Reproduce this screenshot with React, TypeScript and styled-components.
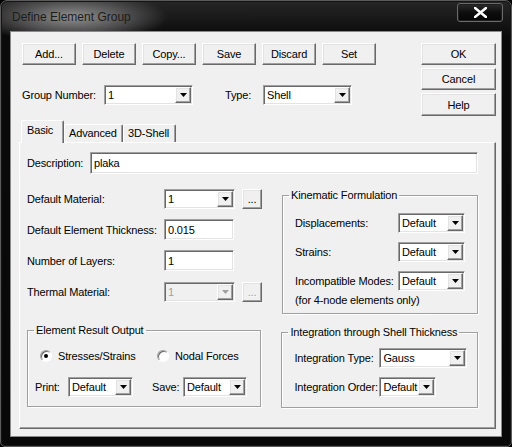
import React from "react";
import styled, { createGlobalStyle } from "styled-components";

const GlobalStyle = createGlobalStyle`
  html, body {
    margin: 0;
    padding: 0;
    background: #000;
  }
  body {
    font-family: "Liberation Sans", Arial, sans-serif;
    font-size: 11px;
    letter-spacing: -0.15px;
    color: #000;
  }
`;

const Frame = styled.div`
  width: 512px;
  height: 447px;
  box-sizing: border-box;
  border: 1px solid #5a5a5a;
  border-radius: 7px 7px 5px 5px;
  padding: 0 9px 9px 9px;
  display: flex;
  flex-direction: column;
  background:
    radial-gradient(ellipse 95px 26px at 72px 16px, rgba(150, 150, 150, 0.95) 0%, rgba(95, 95, 95, 0.8) 55%, rgba(0, 0, 0, 0) 100%),
    linear-gradient(#262626, #0a0a0a 36px, #080808);
  box-shadow: inset 0 0 0 1px #151515;
`;

const TitleBar = styled.div`
  height: 30px;
  display: flex;
  justify-content: space-between;
  align-items: flex-start;
`;

const Title = styled.div`
  font-size: 12px;
  line-height: 14px;
  letter-spacing: 0;
  color: #1c1c1c;
  padding: 9px 0 0 2px;
`;

const CloseBtn = styled.div`
  width: 46px;
  height: 19px;
  margin: 2px -1px 0 0;
  box-sizing: border-box;
  border: 1px solid #6a6a6a;
  border-radius: 3px;
  background: linear-gradient(#2c2c2c, #0e0e0e 50%, #050505);
  box-shadow: inset 0 0 0 1px #1e1e1e;
  display: flex;
  align-items: center;
  justify-content: center;
`;

const Client = styled.div`
  flex: 1;
  box-sizing: border-box;
  border: 1px solid #8a8a8a;
  background: #f0f0f0;
  padding: 11px 5px 7px 11px;
  display: flex;
  flex-direction: column;
`;

const Top = styled.div`
  display: flex;
  justify-content: space-between;
`;

const Column = styled.div<{ $gap?: number }>`
  display: flex;
  flex-direction: column;
  gap: ${(p) => p.$gap ?? 0}px;
`;

const Row = styled.div<{ $gap?: number; $mt?: number }>`
  display: flex;
  align-items: center;
  gap: ${(p) => p.$gap ?? 0}px;
  margin-top: ${(p) => p.$mt ?? 0}px;
`;

const raised = `
  border: 1px solid;
  border-color: #ffffff #696969 #696969 #ffffff;
  box-shadow: inset -1px -1px 0 #a0a0a0, inset 1px 1px 0 #e3e3e3;
`;

const sunken = `
  border: 1px solid;
  border-color: #a0a0a0 #ffffff #ffffff #a0a0a0;
  box-shadow: inset 1px 1px 0 #696969, inset -1px -1px 0 #e3e3e3;
`;

const Button = styled.div<{ $w?: number; $h?: number; $disabled?: boolean }>`
  ${raised}
  width: ${(p) => p.$w ?? 54}px;
  height: ${(p) => p.$h ?? 22}px;
  box-sizing: border-box;
  background: #f0f0f0;
  display: flex;
  align-items: center;
  justify-content: center;
  color: ${(p) => (p.$disabled ? "#a0a0a0" : "#000")};
  text-shadow: ${(p) => (p.$disabled ? "1px 1px 0 #fff" : "none")};
`;

const Label = styled.span<{ $w?: number }>`
  display: inline-block;
  width: ${(p) => (p.$w ? `${p.$w}px` : "auto")};
  flex-shrink: 0;
  white-space: nowrap;
`;

const ComboBox = styled.div<{ $w: number; $h?: number; $disabled?: boolean }>`
  ${sunken}
  width: ${(p) => p.$w}px;
  height: ${(p) => p.$h ?? 20}px;
  box-sizing: border-box;
  padding: 1px;
  background: ${(p) => (p.$disabled ? "#f0f0f0" : "#fff")};
  display: flex;
  align-items: stretch;
  flex-shrink: 0;
`;

const ComboValue = styled.div<{ $disabled?: boolean }>`
  flex: 1;
  padding-left: 2px;
  display: flex;
  align-items: center;
  color: ${(p) => (p.$disabled ? "#a0a0a0" : "#000")};
  overflow: hidden;
  white-space: nowrap;
`;

const DropBtn = styled.div`
  ${raised}
  width: 16px;
  box-sizing: border-box;
  background: #f0f0f0;
  display: flex;
  align-items: center;
  justify-content: center;
`;

const Field = styled.div<{ $w: number; $h?: number }>`
  ${sunken}
  width: ${(p) => p.$w}px;
  height: ${(p) => p.$h ?? 21}px;
  box-sizing: border-box;
  background: #fff;
  padding: 0 3px;
  display: flex;
  align-items: center;
  flex-shrink: 0;
`;

const TabArea = styled.div`
  margin: 4px 0 0 -3px;
  display: flex;
  flex-direction: column;
`;

const TabStrip = styled.div`
  height: 22px;
  display: flex;
  align-items: flex-end;
  padding-left: 2px;
`;

const Tab = styled.div<{ $active?: boolean; $w: number }>`
  width: ${(p) => p.$w}px;
  height: ${(p) => (p.$active ? 23 : 18)}px;
  margin-bottom: ${(p) => (p.$active ? -1 : 0)}px;
  position: relative;
  z-index: ${(p) => (p.$active ? 2 : 0)};
  box-sizing: border-box;
  background: #f0f0f0;
  border: 1px solid;
  border-bottom: none;
  border-color: #ffffff #696969 transparent #ffffff;
  box-shadow: inset -1px 0 0 #a0a0a0;
  border-radius: 2px 2px 0 0;
  padding: ${(p) => (p.$active ? "3px 0 0 5px" : "2px 0 0 4px")};
  line-height: 13px;
`;

const Panel = styled.div`
  height: 287px;
  box-sizing: border-box;
  border: 1px solid;
  border-color: #ffffff #696969 #696969 #ffffff;
  box-shadow: inset -1px -1px 0 #a0a0a0;
  padding: 9px 17px 0 7px;
  display: flex;
  flex-direction: column;
`;

const Split = styled.div<{ $mt: number }>`
  display: flex;
  align-items: flex-start;
  gap: 20px;
  margin-top: ${(p) => p.$mt}px;
`;

const FieldList = styled.div`
  width: 235px;
  display: flex;
  flex-direction: column;
  gap: 10px;
`;

const FieldRow = styled.div`
  height: 21px;
  display: flex;
  align-items: center;
`;

// legend text sits 8px right of the border whatever the padding
const Group = styled.fieldset<{ $w: number; $mt?: number; $pad: [number, number, number, number] }>`
  width: ${(p) => p.$w}px;
  box-sizing: border-box;
  margin: ${(p) => p.$mt ?? 0}px 0 0 0;
  padding: ${(p) => p.$pad.map((v) => `${v}px`).join(" ")};
  min-width: 0;
  border: 1px solid #a0a0a0;
  box-shadow: 1px 1px 0 #fff, inset 1px 1px 0 #fff;
  display: flex;
  flex-direction: column;
  legend {
    padding: 0 2px;
    margin-left: ${(p) => 6 - p.$pad[3]}px;
    line-height: 12px;
    font-size: 11px;
    white-space: nowrap;
  }
`;

const Note = styled.div`
  margin-top: 2px;
  line-height: 14px;
  white-space: nowrap;
`;

const Radio = styled.div<{ $w?: number }>`
  width: ${(p) => (p.$w ? `${p.$w}px` : "auto")};
  display: flex;
  align-items: center;
  gap: 6px;
  white-space: nowrap;
`;

const RadioDot = styled.span<{ $checked?: boolean }>`
  width: 12px;
  height: 12px;
  box-sizing: border-box;
  border-radius: 50%;
  border: 1px solid;
  border-color: #a0a0a0 #ffffff #ffffff #a0a0a0;
  box-shadow: inset 1px 1px 0 #696969;
  background: #fff;
  display: flex;
  align-items: center;
  justify-content: center;
  &::after {
    content: "";
    width: 4px;
    height: 4px;
    border-radius: 50%;
    background: ${(p) => (p.$checked ? "#000" : "transparent")};
  }
`;

const Arrow = ({ color = "#000" }: { color?: string }) => (
  <svg width="7" height="4" viewBox="0 0 7 4">
    <path d="M0 0H7L3.5 4Z" fill={color} />
  </svg>
);

function Combo({ w, value, disabled, h }: { w: number; value: string; disabled?: boolean; h?: number }) {
  return (
    <ComboBox $w={w} $h={h} $disabled={disabled}>
      <ComboValue $disabled={disabled}>{value}</ComboValue>
      <DropBtn>
        <Arrow color={disabled ? "#a0a0a0" : "#000"} />
      </DropBtn>
    </ComboBox>
  );
}

const topButtons = ["Add...", "Delete", "Copy...", "Save", "Discard", "Set"];

export default function App() {
  return (
    <>
      <GlobalStyle />
      <Frame>
        <TitleBar>
          <Title>Define Element Group</Title>
          <CloseBtn>
            <svg width="13" height="11" viewBox="0 0 13 11">
              <path d="M1 1L12 10M12 1L1 10" stroke="#fff" strokeWidth="2.6" strokeLinecap="square" />
            </svg>
          </CloseBtn>
        </TitleBar>
        <Client>
          <Top>
            <Column>
              <Row $gap={6}>
                {topButtons.map((b) => (
                  <Button key={b}>{b}</Button>
                ))}
              </Row>
              <Row $mt={20}>
                <Label $w={82}>Group Number:</Label>
                <Combo w={89} value="1" />
                <Label $w={38} style={{ marginLeft: 32 }}>
                  Type:
                </Label>
                <Combo w={89} value="Shell" />
              </Row>
            </Column>
            <Column $gap={3}>
              <Button $w={75}>OK</Button>
              <Button $w={75}>Cancel</Button>
              <Button $w={75} $h={23}>
                Help
              </Button>
            </Column>
          </Top>

          <TabArea>
            <TabStrip>
              <Tab $active $w={43}>
                Basic
              </Tab>
              <Tab $w={59}>Advanced</Tab>
              <Tab $w={53}>3D-Shell</Tab>
            </TabStrip>
            <Panel>
              <Row>
                <Label $w={63}>Description:</Label>
                <Field $w={388} $h={22}>
                  plaka
                </Field>
              </Row>

              <Split $mt={14}>
                <FieldList>
                  <FieldRow>
                    <Label $w={137}>Default Material:</Label>
                    <Combo w={71} value="1" />
                    <Button $w={20} $h={20} style={{ marginLeft: 7 }}>
                      ...
                    </Button>
                  </FieldRow>
                  <FieldRow>
                    <Label $w={137}>Default Element Thickness:</Label>
                    <Field $w={70}>0.015</Field>
                  </FieldRow>
                  <FieldRow>
                    <Label $w={137}>Number of Layers:</Label>
                    <Field $w={70}>1</Field>
                  </FieldRow>
                  <FieldRow>
                    <Label $w={137}>Thermal Material:</Label>
                    <Combo w={71} value="1" disabled />
                    <Button $w={20} $h={20} $disabled style={{ marginLeft: 7 }}>
                      ...
                    </Button>
                  </FieldRow>
                </FieldList>

                <Group $w={197} $mt={1} $pad={[12, 12, 6, 12]}>
                  <legend>Kinematic Formulation</legend>
                  <Column $gap={9}>
                    <Row>
                      <Label $w={103}>Displacements:</Label>
                      <Combo w={67} value="Default" />
                    </Row>
                    <Row>
                      <Label $w={103}>Strains:</Label>
                      <Combo w={67} value="Default" />
                    </Row>
                    <Row>
                      <Label $w={103}>Incompatible Modes:</Label>
                      <Combo w={67} value="Default" />
                    </Row>
                  </Column>
                  <Note>(for 4-node elements only)</Note>
                </Group>
              </Split>

              <Split $mt={10}>
                <Group $w={235} $pad={[12, 7, 9, 7]}>
                  <legend>Element Result Output</legend>
                  <Row style={{ height: 16, marginLeft: 5 }}>
                    <Radio $w={117}>
                      <RadioDot $checked />
                      Stresses/Strains
                    </Radio>
                    <Radio>
                      <RadioDot />
                      Nodal Forces
                    </Radio>
                  </Row>
                  <Row $mt={13}>
                    <Label $w={33}>Print:</Label>
                    <Combo w={65} value="Default" />
                    <Label $w={31} style={{ marginLeft: 19 }}>
                      Save:
                    </Label>
                    <Combo w={64} value="Default" />
                  </Row>
                </Group>

                <Group $w={197} $mt={2} $pad={[10, 12, 10, 12]}>
                  <legend>Integration through Shell Thickness</legend>
                  <Column $gap={9}>
                    <Row>
                      <Label $w={85}>Integration Type:</Label>
                      <Combo w={88} value="Gauss" />
                    </Row>
                    <Row>
                      <Label $w={85}>Integration Order:</Label>
                      <Combo w={57} value="Default" />
                    </Row>
                  </Column>
                </Group>
              </Split>
            </Panel>
          </TabArea>
        </Client>
      </Frame>
    </>
  );
}
